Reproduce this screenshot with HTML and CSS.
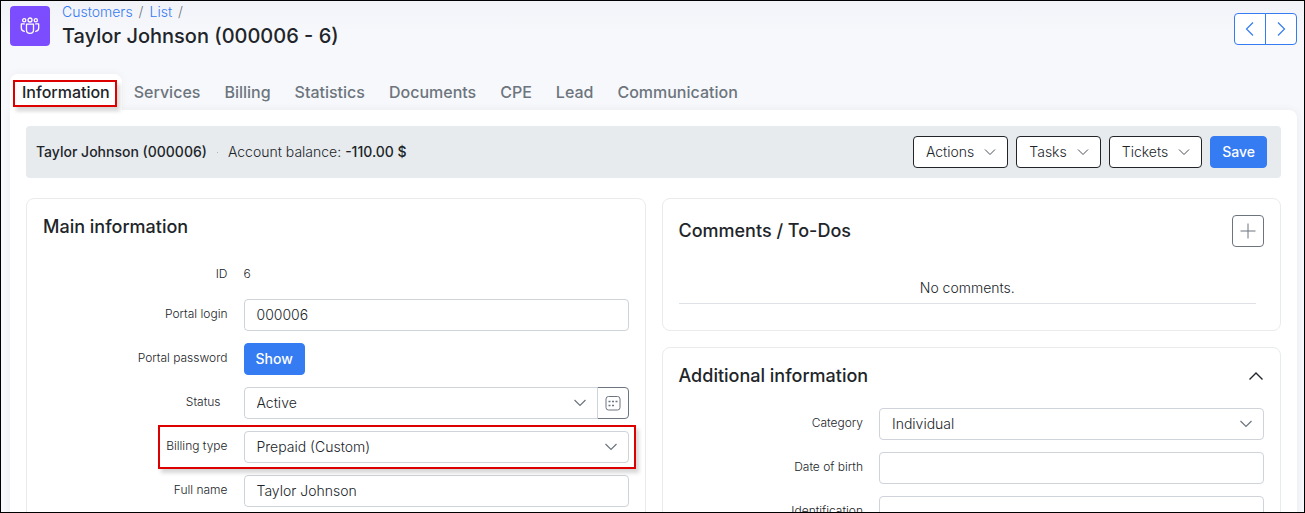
FILE: index.html
```html
<!DOCTYPE html>
<html lang="en">
<head>
<meta charset="utf-8">
<title>Taylor Johnson (000006 - 6)</title>
<link rel="stylesheet" href="styles.css">
</head>
<body>
<div class="app">
  <header class="page-header">
    <div class="page-icon">
      <svg width="20" height="20" viewBox="0 0 20 20">
        <circle cx="10" cy="4" r="2"/><circle cx="4.2" cy="4.3" r="1.6"/><circle cx="15.8" cy="4.3" r="1.6"/>
        <path d="M6.500 8.200h7v5.800c0 2-1.500 3.300-3.500 3.300s-3.500-1.300-3.500-3.300z"/>
        <path d="M4.300 7.900H1.300v4.200c0 1.900 1.100 3 3 3.300M15.700 7.900h3v4.200c0 1.900-1.100 3-3 3.300"/>
      </svg>
    </div>
    <div class="heading">
      <nav class="breadcrumb"><a href="#">Customers</a><span>/</span><a href="#">List</a><span>/</span></nav>
      <h1>Taylor Johnson (000006 - 6)</h1>
    </div>
    <div class="pager">
      <button type="button" aria-label="Previous"><svg width="16" height="16" viewBox="0 0 16 16"><path d="M11 1.500 4.500 8l6.500 6.500"/></svg></button>
      <button type="button" aria-label="Next"><svg width="16" height="16" viewBox="0 0 16 16"><path d="M5 1.500 11.500 8 5 14.500"/></svg></button>
    </div>
  </header>

  <nav class="tabs">
    <a class="tab active" href="#">Information</a>
    <a class="tab" href="#">Services</a>
    <a class="tab" href="#">Billing</a>
    <a class="tab" href="#">Statistics</a>
    <a class="tab" href="#">Documents</a>
    <a class="tab" href="#">CPE</a>
    <a class="tab" href="#">Lead</a>
    <a class="tab" href="#">Communication</a>
  </nav>

  <main class="panel">
    <div class="toolbar">
      <strong>Taylor Johnson (000006)</strong>
      <span class="dot"></span>
      <span class="balance">Account balance: <strong>-110.00 $</strong></span>
      <div class="actions">
        <button type="button" class="btn outline">Actions<svg width="12" height="8" viewBox="0 0 12 8"><path d="M1 1.500l5 5 5-5"/></svg></button>
        <button type="button" class="btn outline">Tasks<svg width="12" height="8" viewBox="0 0 12 8"><path d="M1 1.500l5 5 5-5"/></svg></button>
        <button type="button" class="btn outline">Tickets<svg width="12" height="8" viewBox="0 0 12 8"><path d="M1 1.500l5 5 5-5"/></svg></button>
        <button type="button" class="btn primary">Save</button>
      </div>
    </div>

    <div class="columns">
      <section class="card">
        <div class="card-head"><h2>Main information</h2></div>
        <div class="form">
          <div class="row id-row"><span class="label">ID</span><span class="value">6</span></div>
          <div class="row"><label class="label" for="login">Portal login</label><div class="field"><input class="control" id="login" type="text" value="000006"></div></div>
          <div class="row"><span class="label">Portal password</span><div class="field"><button type="button" class="btn primary">Show</button></div></div>
          <div class="row"><label class="label with-hint" for="status">Status</label>
            <div class="field group">
              <div class="select"><select class="control" id="status"><option>Active</option></select><svg width="12" height="8" viewBox="0 0 12 8"><path d="M.500 1 6 6.500 11.500 1"/></svg></div>
              <button type="button" class="square" aria-label="Schedule">
                <svg width="16" height="16" viewBox="0 0 16 16"><rect x="1" y="1.500" width="14" height="13.500" rx="2.500"/><path class="dots" d="M3.500 6.500h2M7 6.500h2M10.500 6.500h2M3.500 10.500h2M7 10.500h2"/></svg>
              </button>
            </div>
          </div>
          <div class="row highlighted"><label class="label" for="billing">Billing type</label>
            <div class="field"><div class="select"><select class="control" id="billing"><option>Prepaid (Custom)</option></select><svg width="12" height="8" viewBox="0 0 12 8"><path d="M.500 1 6 6.500 11.500 1"/></svg></div></div>
          </div>
          <div class="row"><label class="label" for="name">Full name</label><div class="field"><input class="control" id="name" type="text" value="Taylor Johnson"></div></div>
        </div>
      </section>

      <div class="stack">
        <section class="card">
          <div class="card-head"><h2>Comments / To-Dos</h2>
            <button type="button" class="square" aria-label="Add comment"><svg width="16" height="16" viewBox="0 0 16 16"><path d="M8 .500v15M.500 8h15"/></svg></button>
          </div>
          <p class="empty">No comments.</p>
        </section>
        <section class="card">
          <div class="card-head"><h2>Additional information</h2>
            <button type="button" class="collapse" aria-label="Collapse"><svg width="16" height="10" viewBox="0 0 16 10"><path d="M1.500 8.500 8 2l6.500 6.500"/></svg></button>
          </div>
          <div class="form">
            <div class="row"><label class="label" for="category">Category</label>
              <div class="field"><div class="select"><select class="control" id="category"><option>Individual</option></select><svg width="12" height="8" viewBox="0 0 12 8"><path d="M.500 1 6 6.500 11.500 1"/></svg></div></div>
            </div>
            <div class="row"><label class="label" for="birth">Date of birth</label><div class="field"><input class="control" id="birth" type="text"></div></div>
            <div class="row"><label class="label" for="ident">Identification</label><div class="field"><input class="control" id="ident" type="text"></div></div>
          </div>
        </section>
      </div>
    </div>
  </main>
</div>
</body>
</html>
```
FILE: styles.css
```css
* { box-sizing: border-box; }
body {
  margin: 0;
  font: 300 14px/20px Inter, "Liberation Sans", sans-serif;
  color: #212529;
}
.app {
  display: flex;
  flex-direction: column;
  height: 100vh;
  overflow: hidden;
  padding: 0 7px 0 9px;
  border: 1px solid #000;
  background: linear-gradient(#f2f3f8, #f7f8fc 32px);
}
h1, h2, p { margin: 0; }
h1 { font-size: 20px; line-height: 28px; font-weight: 500; }
h2 { font-size: 18px; line-height: 24px; font-weight: 500; }
a { color: #357bf2; text-decoration: none; }
button, input, select { font: inherit; color: inherit; }
button { margin: 0; padding: 0; background: #fff; }
svg { display: block; flex: none; fill: none; stroke: currentColor; }
strong { font-weight: 500; }

.page-header { display: flex; gap: 12px; padding-top: 1px; }
.page-icon {
  display: grid;
  place-items: center;
  width: 40px;
  height: 40px;
  margin-top: 4px;
  border-radius: 4px;
  background: #7c4dff;
  color: #fff;
}
.page-icon svg { stroke-width: 1.3; stroke-linecap: round; stroke-linejoin: round; }
.heading { flex: 1; }
.breadcrumb { display: flex; gap: 6px; color: #6c757d; }
.pager { display: flex; margin-top: 11px; }
.pager button {
  display: grid;
  place-items: center;
  width: 32px;
  height: 32px;
  border: 1px solid #357bf2;
  border-radius: 4px 0 0 4px;
  color: #357bf2;
}
.pager button + button { margin-left: -1px; border-radius: 0 4px 4px 0; }
.pager svg { stroke-width: 1.2; }

.tabs { display: flex; margin-top: 24px; }
.tab {
  position: relative;
  padding: 6px 12px;
  font-size: 16px;
  line-height: 24px;
  font-weight: 500;
  color: #6c757d;
}
.tab.active {
  border-radius: 8px 8px 0 0;
  background: #fff;
  color: #212529;
  box-shadow: 0 -2px 8px rgba(0, 0, 0, .03);
}
.tab.active::after, .highlighted::after {
  content: "";
  position: absolute;
  z-index: 2;
  border: 2px solid #dc0000;
  box-shadow: 3px 4px 4px rgba(0, 0, 0, .16);
  pointer-events: none;
}
.tab.active::after { inset: 6px 5px 3px 3px; }

.panel {
  flex: 1 0 auto;
  padding: 16px;
  border-radius: 0 8px 0 0;
  background: #fff;
  box-shadow: 0 0 8px rgba(0, 0, 0, .06);
}
.toolbar {
  display: flex;
  align-items: center;
  padding: 10px 14px 10px 10px;
  border-radius: 4px;
  background: #e7ebee;
}
.dot { width: 1px; height: 1px; margin: 0 10px; background: #adb5bd; }
.actions { display: flex; gap: 8px; margin-left: auto; }
.btn {
  display: inline-flex;
  align-items: center;
  gap: 10px;
  height: 32px;
  padding: 0 12px;
  border: 1px solid #212529;
  border-radius: 4px;
}
.btn svg { color: #495057; }
.btn.outline { padding-right: 11px; }
.btn.primary { padding: 0 11px; border-color: #357bf2; background: #357bf2; color: #fff; font-weight: 500; }

.columns { display: grid; grid-template-columns: 1fr 1fr; gap: 16px; margin-top: 20px; }
.stack { display: flex; flex-direction: column; gap: 16px; }
.card { padding: 16px; border: 1px solid #e9ebed; border-radius: 8px; }
.card-head { display: flex; align-items: center; justify-content: space-between; }
.square {
  display: grid;
  place-items: center;
  width: 32px;
  height: 32px;
  border: 1px solid #6c757d;
  border-radius: 4px;
  color: #6c757d;
}
.collapse { border: 0; }
.collapse svg { stroke-width: 1.4; }
.empty {
  margin: 24px 8px 10px 0;
  padding: 7px 0 5px;
  border-bottom: 1px solid #dee2e6;
  text-align: center;
}

.form { display: grid; gap: 12px; margin-top: 20px; }
.row {
  position: relative;
  display: grid;
  grid-template-columns: repeat(3, 1fr);
  column-gap: 16px;
  align-items: center;
  min-height: 32px;
}
.id-row { min-height: 28px; }
.label { padding-bottom: 2px; font-size: 12px; text-align: right; }
.id-row .label, .value { padding: 2px 0 0; }
.with-hint { padding-right: 7px; }
.value { font-size: 12px; }
.field { grid-column: span 2; }
.group { display: flex; }
.control {
  display: block;
  width: 100%;
  height: 32px;
  padding: 0 12px;
  border: 1px solid #ced4da;
  border-radius: 4px;
  background: #fff;
  appearance: none;
}
input.control { padding-bottom: 1px; }
.select { position: relative; flex: 1; color: #212529; }
.select svg { position: absolute; right: 12px; top: 12px; color: #6c757d; stroke-width: 1.2; pointer-events: none; }
.group .control { border-radius: 4px 0 0 4px; }
.group .square { margin-left: -1px; border-radius: 0 4px 4px 0; }
.square .dots { stroke-width: 1.5; }
.highlighted::after { inset: -6px -7px -6px calc(33.333% - 80px); }
```
